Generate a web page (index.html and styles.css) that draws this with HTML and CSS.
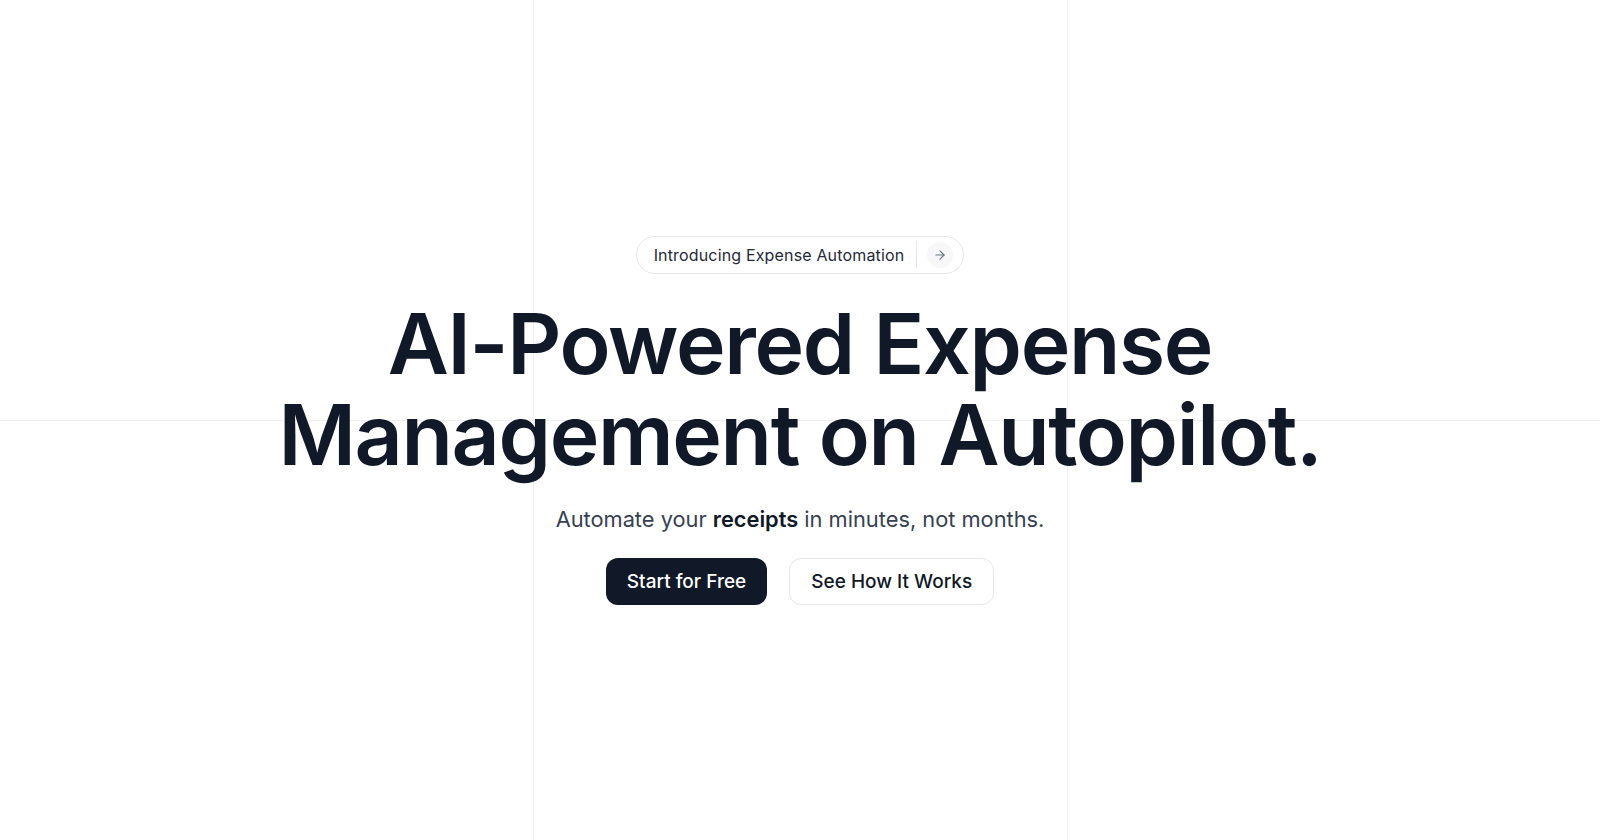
FILE: index.html
```html
<!DOCTYPE html>
<html lang="en">
<head>
<meta charset="utf-8">
<title>AI-Powered Expense Management</title>
<link rel="stylesheet" href="styles.css">
</head>
<body>
<main class="hero">
  <div class="hero-content">
    <a class="badge" href="#">
      <span class="badge-text">Introducing Expense Automation</span>
      <span class="badge-divider"></span>
      <span class="badge-icon">
        <svg width="14" height="14" viewBox="0 0 24 24" fill="none" stroke="currentColor" stroke-width="2" stroke-linecap="round" stroke-linejoin="round"><path d="M5 12h14"/><path d="M12 5l7 7-7 7"/></svg>
      </span>
    </a>
    <h1 class="title">AI-Powered Expense<br>Management on Autopilot.</h1>
    <p class="subtitle">Automate your <strong>receipts</strong> in minutes, not months.</p>
    <div class="actions">
      <a class="btn btn-primary" href="#">Start for Free</a>
      <a class="btn btn-outline" href="#">See How It Works</a>
    </div>
  </div>
</main>
</body>
</html>
```

FILE: styles.css
```css
* { box-sizing: border-box; }
html, body { margin: 0; padding: 0; }
body {
  font-family: "Inter", "Noto Sans", sans-serif;
  color: #111827;
  background: #ffffff;
}
.hero {
  height: 840px;
  display: flex;
  align-items: center;
  justify-content: center;
  background-color: #fff;
  background-image:
    linear-gradient(to right, transparent 533px, #f0f0f0 533px, #f0f0f0 534px, transparent 534px, transparent 1067px, #f0f0f0 1067px, #f0f0f0 1068px, transparent 1068px),
    linear-gradient(to bottom, transparent 420px, #f0f0f0 420px, #f0f0f0 421px, transparent 421px);
}
.hero-content {
  display: flex;
  flex-direction: column;
  align-items: center;
  text-align: center;
}
.badge {
  display: inline-flex;
  align-items: center;
  height: 38px;
  padding: 0 10px 0 17px;
  border: 1px solid #e5e7eb;
  border-radius: 999px;
  background: #fff;
  text-decoration: none;
  color: #1f2937;
}
.badge-text {
  font-size: 16px;
  font-weight: 400;
  letter-spacing: 0.01em;
}
.badge-divider {
  width: 1px;
  height: 27px;
  background: #e5e7eb;
  margin-left: 12px;
}
.badge-icon {
  width: 26px;
  height: 26px;
  margin-left: 10px;
  border-radius: 50%;
  background: #f7f7f8;
  color: #6b7280;
  display: flex;
  align-items: center;
  justify-content: center;
}
.title {
  margin: 24px 0 0;
  font-size: 84px;
  line-height: 91px;
  font-weight: 600;
  letter-spacing: -0.016em;
  color: #111827;
}
.subtitle {
  margin: 24px 0 0;
  font-size: 21.8px;
  line-height: 30px;
  color: #374151;
}
.subtitle strong {
  font-weight: 600;
  color: #111827;
}
.actions {
  display: flex;
  gap: 22px;
  margin-top: 24px;
}
.btn {
  display: inline-flex;
  align-items: center;
  justify-content: center;
  height: 47px;
  padding: 0 21px;
  border-radius: 12px;
  font-size: 19px;
  font-weight: 500;
  text-decoration: none;
}
.btn-primary {
  background: #111827;
  color: #fff;
}
.btn-outline {
  background: #fff;
  color: #111827;
  border: 1px solid #e5e7eb;
}
```
